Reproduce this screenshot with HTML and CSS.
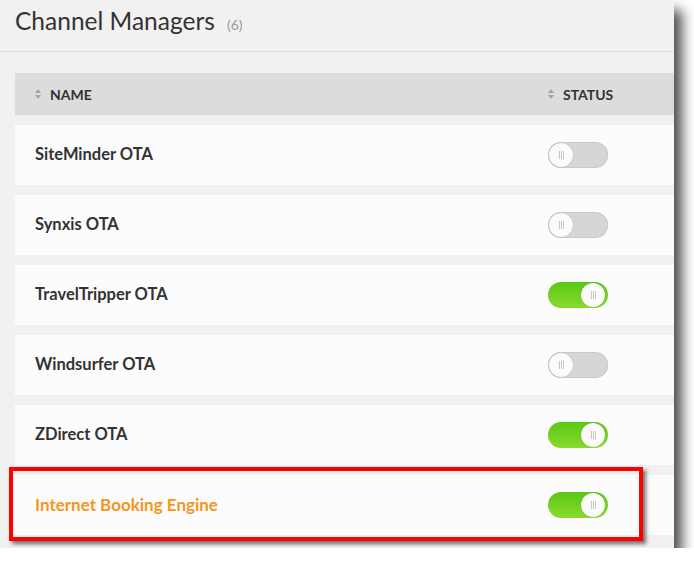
FILE: index.html
```html
<!DOCTYPE html>
<html>
  <head>
    <meta charset="utf-8"/>
    <link rel="stylesheet" href="styles.css">
  </head>
  <body>
    <div class="shot">
      <div class="page">
        <header class="title-bar">
          <h1>Channel Managers</h1>
          <span class="count">(6)</span>
        </header>

        <div class="table">
          <div class="thead">
            <div class="col-name"><i class="sort"></i>NAME</div>
            <div class="col-status"><i class="sort"></i>STATUS</div>
          </div>

          <div class="row">
            <div class="col-name">SiteMinder OTA</div>
            <div class="col-status"><span class="toggle"><span class="knob"></span></span></div>
          </div>
          <div class="row">
            <div class="col-name">Synxis OTA</div>
            <div class="col-status"><span class="toggle"><span class="knob"></span></span></div>
          </div>
          <div class="row">
            <div class="col-name">TravelTripper OTA</div>
            <div class="col-status"><span class="toggle on"><span class="knob"></span></span></div>
          </div>
          <div class="row">
            <div class="col-name">Windsurfer OTA</div>
            <div class="col-status"><span class="toggle"><span class="knob"></span></span></div>
          </div>
          <div class="row">
            <div class="col-name">ZDirect OTA</div>
            <div class="col-status"><span class="toggle on"><span class="knob"></span></span></div>
          </div>
          <div class="row">
            <div class="col-name link">Internet Booking Engine</div>
            <div class="col-status"><span class="toggle on"><span class="knob"></span></span></div>
          </div>
        </div>
      </div>

      <!-- annotation drawn over the screenshot -->
      <div class="callout"></div>
    </div>
  </body>
</html>
```

FILE: styles.css
```css
body {
  margin: 0;
  background: #fff;
  font-family: Lato, "Open Sans", sans-serif;
}
.shot {
  position: relative;
  width: 674px;
  height: 548px;
  box-shadow: 8px 10px 12px rgba(0, 0, 0, 0.7);
}
.page {
  height: 100%;
  background-color: #f1f1f1;
  overflow: hidden;
}
.title-bar {
  display: flex;
  align-items: baseline;
  gap: 12px;
  height: 52px;
  padding-left: 15px;
  border-bottom: 1px solid #dcdcdc;
  box-sizing: border-box;
}
.title-bar h1 {
  margin: 0;
  padding-top: 6px;
  font-size: 24.5px;
  font-weight: 400;
  color: #333;
  line-height: 30px;
}
.count {
  font-size: 14px;
  color: #999;
}
.table {
  display: flex;
  flex-direction: column;
  gap: 10px;
  margin: 21px 0 0 15px;
}
.thead, .row {
  display: flex;
  align-items: center;
}
.thead {
  height: 42px;
  background: #dcdcdc;
  font-size: 14px;
  font-weight: 700;
  color: #333;
}
.row {
  height: 60px;
  background: #fcfcfc;
  font-size: 16.5px;
  font-weight: 700;
  color: #333;
}
.row .col-name {
  padding-bottom: 2px;
}
.col-name {
  width: 518px;
  padding-left: 20px;
  box-sizing: border-box;
  display: flex;
  align-items: center;
}
.col-status {
  padding-left: 15px;
  display: flex;
  align-items: center;
}
.link {
  color: #f7941d;
  font-size: 17px;
}
.sort {
  position: relative;
  width: 7px;
  height: 10px;
  margin-right: 8px;
}
.sort::before, .sort::after {
  content: "";
  position: absolute;
  left: 0;
  border-left: 3.5px solid transparent;
  border-right: 3.5px solid transparent;
}
.sort::before {
  top: 0;
  border-bottom: 4px solid #a5a5a5;
}
.sort::after {
  bottom: 0;
  border-top: 4px solid #a5a5a5;
}
.toggle {
  display: flex;
  align-items: center;
  width: 60px;
  height: 26px;
  padding: 1px;
  box-sizing: border-box;
  border-radius: 13px;
  background: #d6d6d6;
  box-shadow: inset 0 0 0 1px #cacaca;
}
.toggle.on {
  justify-content: flex-end;
  background: linear-gradient(#59c816, #8ad92e);
  box-shadow: none;
}
.knob {
  width: 24px;
  height: 24px;
  border-radius: 50%;
  background: #fbfbfb;
  box-shadow: 0 0 1px rgba(0, 0, 0, 0.3);
  display: flex;
  align-items: center;
  justify-content: center;
}
.knob::before {
  content: "";
  width: 5px;
  height: 8px;
  border-left: 1px solid #c8c8c8;
  border-right: 1px solid #c8c8c8;
  box-sizing: border-box;
  background: linear-gradient(to right, transparent 1px, #c8c8c8 1px, #c8c8c8 2px, transparent 2px);
}
.toggle.on .knob {
  margin-right: 2px;
}
.callout {
  position: absolute;
  left: 9px;
  top: 467px;
  width: 634px;
  height: 74px;
  box-sizing: border-box;
  border: 4px solid #ff0000;
  box-shadow: 3px 3px 4px rgba(0, 0, 0, 0.55);
}
```
